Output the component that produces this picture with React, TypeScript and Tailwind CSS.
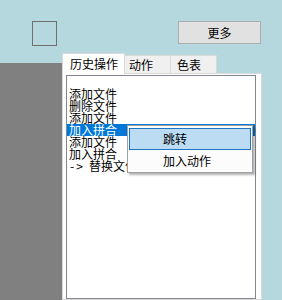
const history = ['', '添加文件', '删除文件', '添加文件', '加入拼合', '添加文件', '加入拼合', '替换文件'];

export default function App() {
  const selected = 4;

  return (
    <div className="relative w-[282px] h-[300px] overflow-hidden bg-[#b4d8de] text-[12px] text-black font-['Noto_Sans_CJK_SC','Noto_Sans',sans-serif]">
      {/* top row */}
      <div className="flex items-start h-[53px] pt-[21px]">
        <div className="ml-[32px] w-[25px] h-[25px] border border-[#707070]" />
        <button className="ml-auto mr-[21px] w-[83px] h-[23px] border border-[#adadad] bg-[#e1e1e1] leading-none">
          更多
        </button>
      </div>

      <div className="flex h-[247px]">
        <div className="w-[62px] mt-[10px] bg-[#808080]" />

        {/* tab control */}
        <div className="w-[200px] flex flex-col">
          <div className="relative z-10 flex items-end h-[20px]">
            <div className="h-[21px] w-[63px] -mb-px bg-white border border-b-0 border-[#d9d9d9] pl-[7px] leading-[20px]">
              历史操作
            </div>
            <div className="h-[18px] w-[46px] bg-[#f0f0f0] border border-l-0 border-b-0 border-[#d9d9d9] pl-[4px] leading-[18px]">
              动作
            </div>
            <div className="h-[18px] w-[46px] bg-[#f0f0f0] border border-l-0 border-b-0 border-[#d9d9d9] pl-[6px] leading-[18px]">
              色表
            </div>
          </div>

          <div className="flex-1 bg-white border border-[#d9d9d9] pl-[3px] pr-[5px] pt-px">
            <div className="h-full border border-[#828790] bg-white">
              {history.map((item, i) => (
                <div
                  key={i}
                  className={`h-[12px] leading-[12px] pl-[2px] whitespace-pre ${
                    i === selected ? 'bg-[#0078d7] text-white' : ''
                  }`}
                >
                  {i === history.length - 1 && (
                    <span className="inline-block w-[20px] pl-px tracking-[2px]">-&gt;</span>
                  )}
                  {item}
                </div>
              ))}
            </div>
          </div>
        </div>
      </div>

      {/* context menu */}
      <div className="absolute left-[127px] top-[125px] w-[126px] h-[48px] border border-[#a0a0a0] bg-[#fcfcfc] px-px pt-[2px] shadow-[2px_2px_2px_rgba(0,0,0,0.3)]">
        <div className="h-[22px] leading-[20px] border border-[#1f74c8] bg-[#bcdcf4] pl-[33px]">跳转</div>
        <div className="h-[22px] leading-[22px] pl-[34px]">加入动作</div>
      </div>
    </div>
  );
}
